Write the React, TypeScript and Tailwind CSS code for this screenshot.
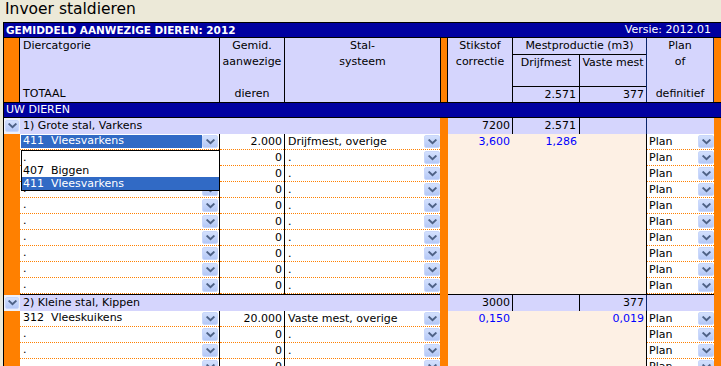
import React from "react";

type Row = {
  cat: string;
  sel?: boolean;
  num: string;
  stal: string;
  n?: string;
  d?: string;
  v?: string;
};

function Chevron() {
  return (
    <svg width="9" height="6" viewBox="0 0 9 6" className="block">
      <path d="M1.3 1.2 L4.5 4.2 L7.7 1.2" fill="none" stroke="#4d6185" strokeWidth="1.9" strokeLinecap="square" />
    </svg>
  );
}

function Btn({ small }: { small?: boolean }) {
  return (
    <span
      className={
        small
          ? "flex h-[12px] w-[14px] shrink-0 items-center justify-center rounded-[2px] border border-[#c9d7fb] bg-linear-to-b from-[#d3e0fd] to-[#b4c8f6]"
          : "flex h-[13px] w-[16px] shrink-0 items-center justify-center rounded-[2px] border border-[#c9d7fb] bg-linear-to-b from-[#d3e0fd] to-[#b4c8f6]"
      }
    >
      <Chevron />
    </span>
  );
}

function Dotted() {
  return <div className="border-b border-dotted border-[#ff8000]" />;
}

function Detail({ r, first }: { r: Row; first?: boolean }) {
  return (
    <div className="flex h-[16px]">
      <div className="w-[16px] bg-[#ff8000]" />
      <div className="relative flex w-[200px] flex-col border-r border-black bg-white">
        <div className="flex h-[15px] items-center pl-[1px] pr-[1px]">
          <div
            className={
              r.sel
                ? "flex h-[13px] flex-1 items-center whitespace-pre bg-[#316ac5] pl-[2px] text-white"
                : "flex h-[13px] flex-1 items-center whitespace-pre pl-[2px]"
            }
          >
            {r.cat}
          </div>
          <Btn />
        </div>
        <Dotted />
        {first && (
          <div className="absolute left-[1px] top-[16px] z-10 w-[199px] border border-black bg-white">
            <div className="h-[13px] whitespace-pre pl-[1px] leading-[13px]">.</div>
            <div className="h-[13px] whitespace-pre pl-[1px] leading-[13px]">407  Biggen</div>
            <div className="h-[13px] whitespace-pre bg-[#316ac5] pl-[1px] leading-[13px] text-white">411  Vleesvarkens</div>
          </div>
        )}
      </div>
      <div className="flex w-[65px] flex-col border-r border-black bg-white">
        <div className="h-[15px] pr-[2px] text-right leading-[15px]">{r.num}</div>
        <Dotted />
      </div>
      <div className="flex w-[155px] flex-col bg-white">
        <div className="flex h-[15px] items-center pl-[1px]">
          <div className="flex-1 whitespace-pre pl-[2px] leading-[15px]">{r.stal}</div>
          <Btn />
        </div>
        <Dotted />
      </div>
      <div className="w-[8px] bg-[#ff8000]" />
      <div className="w-[65px] bg-[#fdf0e4] pr-[3px] text-right leading-[15px] text-[#0000ff]">{r.n}</div>
      <div className="w-[67px] bg-[#fdf0e4] pr-[3px] text-right leading-[15px] text-[#0000ff]">{r.d}</div>
      <div className="w-[66px] bg-[#fdf0e4] pr-[2px] text-right leading-[15px] text-[#0000ff]">{r.v}</div>
      <div className="flex w-[68px] flex-col border-l border-black bg-white">
        <div className="flex h-[15px] items-center">
          <div className="flex-1 pl-[2px] leading-[15px]">Plan</div>
          <Btn />
        </div>
        <Dotted />
      </div>
      <div className="flex-1 bg-[#ff8000]" />
    </div>
  );
}

function Group({ label, n, d, v, top }: { label: string; n: string; d: string; v: string; top?: boolean }) {
  return (
    <>
      {top && (
        <div className="flex h-[1px]">
          <div className="w-[16px] bg-[#ff8000]" />
          <div className="w-[420px] bg-black" />
          <div className="w-[8px] bg-[#ff8000]" />
          <div className="w-[266px] bg-black" />
          <div className="flex-1 bg-[#ff8000]" />
        </div>
      )}
      <div className="flex h-[16px]">
        <div className="flex w-[16px] items-center justify-center bg-[#eef0fa]">
          <Btn small />
        </div>
        <div className="w-[420px] bg-[#d5d5fd] pl-[3px] leading-[16px]">{label}</div>
        <div className="w-[8px] bg-[#ff8000]" />
        <div className="w-[65px] border-r border-black bg-[#d5d5fd] pr-[2px] text-right leading-[16px]">{n}</div>
        <div className="w-[67px] border-r border-black bg-[#d5d5fd] pr-[3px] text-right leading-[16px]">{d}</div>
        <div className="w-[66px] bg-[#d5d5fd] pr-[2px] text-right leading-[16px]">{v}</div>
        <div className="w-[68px] border-l border-[#0a246a] bg-[#d5d5fd]" />
        <div className="flex-1 bg-[#ff8000]" />
      </div>
    </>
  );
}

const empty: Row = { cat: ".", num: "0", stal: "." };

const g1: Row[] = [
  { cat: "411  Vleesvarkens", sel: true, num: "2.000", stal: "Drijfmest, overige", n: "3,600", d: "1,286" },
  ...Array.from({ length: 9 }, () => empty),
];

const g2: Row[] = [
  { cat: "312  Vleeskuikens", num: "20.000", stal: "Vaste mest, overige", n: "0,150", v: "0,019" },
  ...Array.from({ length: 6 }, () => empty),
];

export default function App() {
  return (
    <div className="h-[366px] w-[721px] overflow-hidden bg-[#ece9d8] font-['DejaVu_Sans',sans-serif] text-[11px] text-black">
      <div className="h-[22px] pl-[5px] text-[15.5px] leading-[18px]">Invoer staldieren</div>
      <div className="ml-[3px] border-l border-t border-black">
        {/* title bar */}
        <div className="flex h-[15px] items-center justify-between border-b border-black bg-[#0000a0] pl-[2px] pr-[10px] text-white">
          <span className="text-[10.5px] font-bold leading-[14px]">GEMIDDELD AANWEZIGE DIEREN: 2012</span>
          <span className="leading-[14px]">Versie: 2012.01</span>
        </div>
        {/* header */}
        <div className="flex h-[65px] border-b border-black bg-[#d5d5fd] leading-[16px]">
          <div className="w-[16px] border-r border-black bg-[#ff8000]" />
          <div className="flex w-[200px] flex-col justify-between border-r border-black pl-[3px]">
            <div>Diercatgorie</div>
            <div>TOTAAL</div>
          </div>
          <div className="w-[65px] border-r border-black text-center">
            <div>Gemid.</div>
            <div>aanwezige</div>
            <div>&nbsp;</div>
            <div>dieren</div>
          </div>
          <div className="w-[155px] text-center">
            <div>Stal-</div>
            <div>systeem</div>
          </div>
          <div className="w-[8px] border-x border-black bg-[#ff8000]" />
          <div className="w-[65px] border-r border-black text-center">
            <div>Stikstof</div>
            <div>correctie</div>
          </div>
          <div className="flex w-[133px] flex-col">
            <div className="h-[17px] border-b border-black text-center">Mestproductie (m3)</div>
            <div className="flex h-[32px] border-b border-black">
              <div className="w-[67px] border-r border-black text-center">Drijfmest</div>
              <div className="w-[66px] text-center">Vaste mest</div>
            </div>
            <div className="flex h-[15px] leading-[15px]">
              <div className="w-[67px] border-r border-black pr-[3px] text-right">2.571</div>
              <div className="w-[66px] pr-[2px] text-right">377</div>
            </div>
          </div>
          <div className="w-[68px] border-x border-[#0a246a] text-center">
            <div>Plan</div>
            <div>of</div>
            <div>&nbsp;</div>
            <div>definitief</div>
          </div>
          <div className="flex-1 bg-[#ff8000]" />
        </div>
        {/* UW DIEREN */}
        <div className="h-[15px] border-b border-black bg-[#0000a0] pl-[2px] leading-[14px] text-white">UW DIEREN</div>
        <Group label="1) Grote stal, Varkens" n="7200" d="2.571" v="" />
        {g1.map((r, i) => (
          <Detail key={"a" + i} r={r} first={i === 0} />
        ))}
        <Group label="2) Kleine stal, Kippen" n="3000" d="" v="377" top />
        {g2.map((r, i) => (
          <Detail key={"b" + i} r={r} />
        ))}
      </div>
    </div>
  );
}
